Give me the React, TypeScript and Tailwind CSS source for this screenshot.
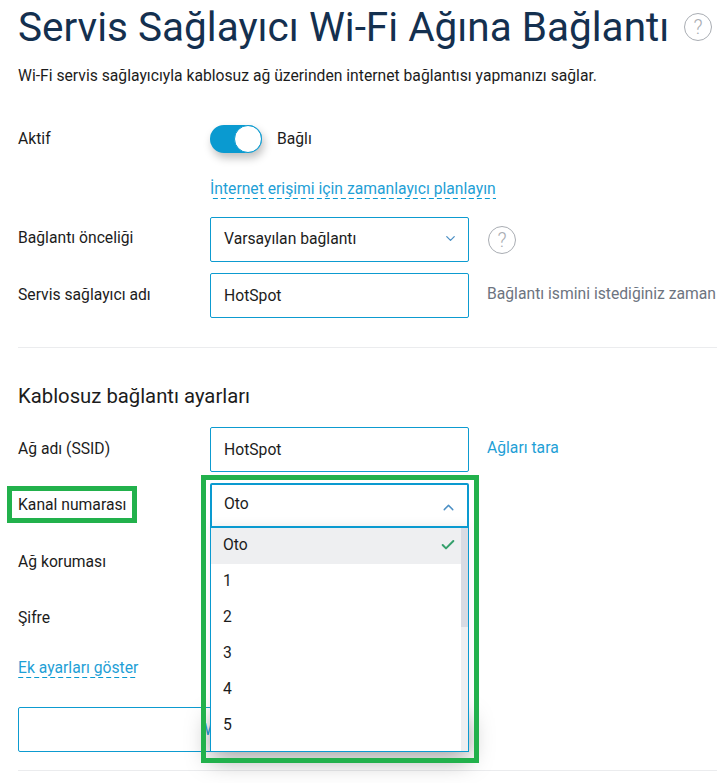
import React from 'react';
import { ChevronDown, ChevronUp, Check } from 'lucide-react';

function HelpIcon() {
  return (
    <span className="flex h-[28px] w-[28px] items-center justify-center rounded-full border border-[#a9adb3] text-[20px] font-light leading-none text-[#a9adb3]">
      ?
    </span>
  );
}

function Row({ label, labelClass = 'pb-px', children }: { label: string; labelClass?: string; children?: React.ReactNode }) {
  return (
    <div className="flex h-[45px] items-center">
      <div className={`w-[192px] shrink-0 text-[15.7px] text-[#1c1c1c] ${labelClass}`}>{label}</div>
      {children}
    </div>
  );
}

function Field({ value, icon }: { value: string; icon?: React.ReactNode }) {
  return (
    <div className={`flex h-[45px] w-[259px] shrink-0 items-center justify-between rounded-[2px] border border-[#0d9bd0] pl-[13px] pr-[10px] text-[15.7px] text-[#1c1c1c] ${icon ? 'pb-[2px]' : ''}`}>
      <span>{value}</span>
      {icon}
    </div>
  );
}

function DashedLink({ children }: { children: React.ReactNode }) {
  return (
    <a className="inline-block h-[19px] bg-[linear-gradient(to_right,#0a9ad0_5px,transparent_5px)] bg-[length:8px_1px] bg-bottom bg-repeat-x text-[15.7px] leading-[17px] text-[#1f9fd6]">
      {children}
    </a>
  );
}

const options = ['Oto', '1', '2', '3', '4', '5'];

export default function App() {
  return (
    <div className="relative h-[783px] w-[717px] overflow-hidden bg-white pl-[18px] font-['Roboto',sans-serif]">
      <div className="flex h-[54px] items-center whitespace-nowrap">
        <h1 className="w-[666px] shrink-0 text-[40.5px] leading-[54px] text-[#14304f]">Servis Sağlayıcı Wi-Fi Ağına Bağlantı</h1>
        <HelpIcon />
      </div>

      <p className="mt-[12px] h-[20px] whitespace-nowrap text-[15.7px] leading-[20px] text-[#1c1c1c]">
        Wi-Fi servis sağlayıcıyla kablosuz ağ üzerinden internet bağlantısı yapmanızı sağlar.
      </p>

      <div className="mt-[39px] flex h-[28px] items-center">
        <div className="w-[192px] text-[15.7px] text-[#1c1c1c]">Aktif</div>
        <div className="flex h-[28px] w-[52px] justify-end rounded-full bg-[#0a9ad0] shadow-[2px_5px_8px_rgba(0,0,0,0.25)]">
          <div className="h-[28px] w-[28px] rounded-full border border-[#0a9ad0] bg-white" />
        </div>
        <span className="ml-[15px] text-[15.7px] text-[#1c1c1c]">Bağlı</span>
      </div>

      <div className="ml-[192px] mt-[24px] h-[18px]">
        <DashedLink>İnternet erişimi için zamanlayıcı planlayın</DashedLink>
      </div>

      <div className="mt-[22px] flex flex-col gap-[11px] whitespace-nowrap">
        <Row label="Bağlantı önceliği" labelClass="pb-[3px]">
          <Field value="Varsayılan bağlantı" icon={<ChevronDown className="h-[15px] w-[15px] text-[#4b8fc4]" />} />
          <div className="ml-[19px]">
            <HelpIcon />
          </div>
        </Row>
        <Row label="Servis sağlayıcı adı">
          <Field value="HotSpot" />
          <span className="ml-[18px] pb-[3px] text-[15.7px] text-[#6d7480]">Bağlantı ismini istediğiniz zaman</span>
        </Row>
      </div>

      <div className="mt-[29px] h-px bg-[#ebecee]" />

      <h2 className="mt-[35px] h-[26px] text-[20.3px] font-normal leading-[26px] text-[#1c1c1c]">Kablosuz bağlantı ayarları</h2>

      <div className="mt-[18px] flex flex-col gap-[11px] whitespace-nowrap">
        <Row label="Ağ adı (SSID)">
          <Field value="HotSpot" />
          <a className="ml-[18px] pb-[3px] text-[15.7px] text-[#1f9fd6]">Ağları tara</a>
        </Row>
        <Row label="Kanal numarası">
          <Field value="Oto" />
        </Row>
        <Row label="Ağ koruması" labelClass="pt-px">
          <Field value="" />
        </Row>
        <Row label="Şifre" labelClass="pt-px">
          <Field value="" />
        </Row>
      </div>

      <div className="mt-[16px] h-[19px]">
        <DashedLink>Ek ayarları göster</DashedLink>
      </div>

      <div className="mt-[32px] flex h-[45px] w-[400px] items-center rounded-[2px] border border-[#0d9bd0] pl-[185px] text-[15.7px] text-[#1f9fd6]">
        W
      </div>

      <div className="mt-[18px] h-px bg-[#ebecee]" />

      {/* open channel dropdown */}
      <div className="absolute left-[210px] top-[710px] h-[42px] w-[259px] shadow-[0_8px_24px_rgba(0,0,0,0.35)]" />
      <div className="absolute left-[210px] top-[483px] w-[259px] bg-white text-[15.7px] text-[#1c1c1c]">
        <div className="relative z-10 flex h-[45px] items-center justify-between rounded-t-[2px] border-2 border-[#0a9ad0] pb-[3px] pl-[12px] pr-[10px]">
          <span>Oto</span>
          <ChevronUp className="mt-[6px] h-[17px] w-[17px] text-[#4b8fc4]" />
        </div>
        <div className="-mt-px flex h-[225px] border border-t-0 border-[#0a9ad0] shadow-[0_-4px_8px_rgba(0,0,0,0.05)]">
          <div className="w-[250px] pt-px">
            {options.map((opt, i) => (
              <div key={opt} className={`flex h-[36px] items-center justify-between pb-[2px] pl-[12px] pr-[5px] ${i === 0 ? 'bg-[#eeeff1]' : ''}`}>
                <span>{opt}</span>
                {i === 0 && <Check className="h-[16px] w-[16px] text-[#35a06c]" strokeWidth={3} />}
              </div>
            ))}
          </div>
          <div className="flex-1 bg-[#eeeff1]">
            <div className="h-[100px] bg-[#d8dbe3]" />
          </div>
        </div>
      </div>

      {/* green annotation frames */}
      <div className="absolute left-[7px] top-[486px] h-[37px] w-[130px] border-[5px] border-[#22b14c]" />
      <div className="absolute left-[201px] top-[475px] h-[288px] w-[278px] border-[5px] border-[#22b14c]" />
    </div>
  );
}
